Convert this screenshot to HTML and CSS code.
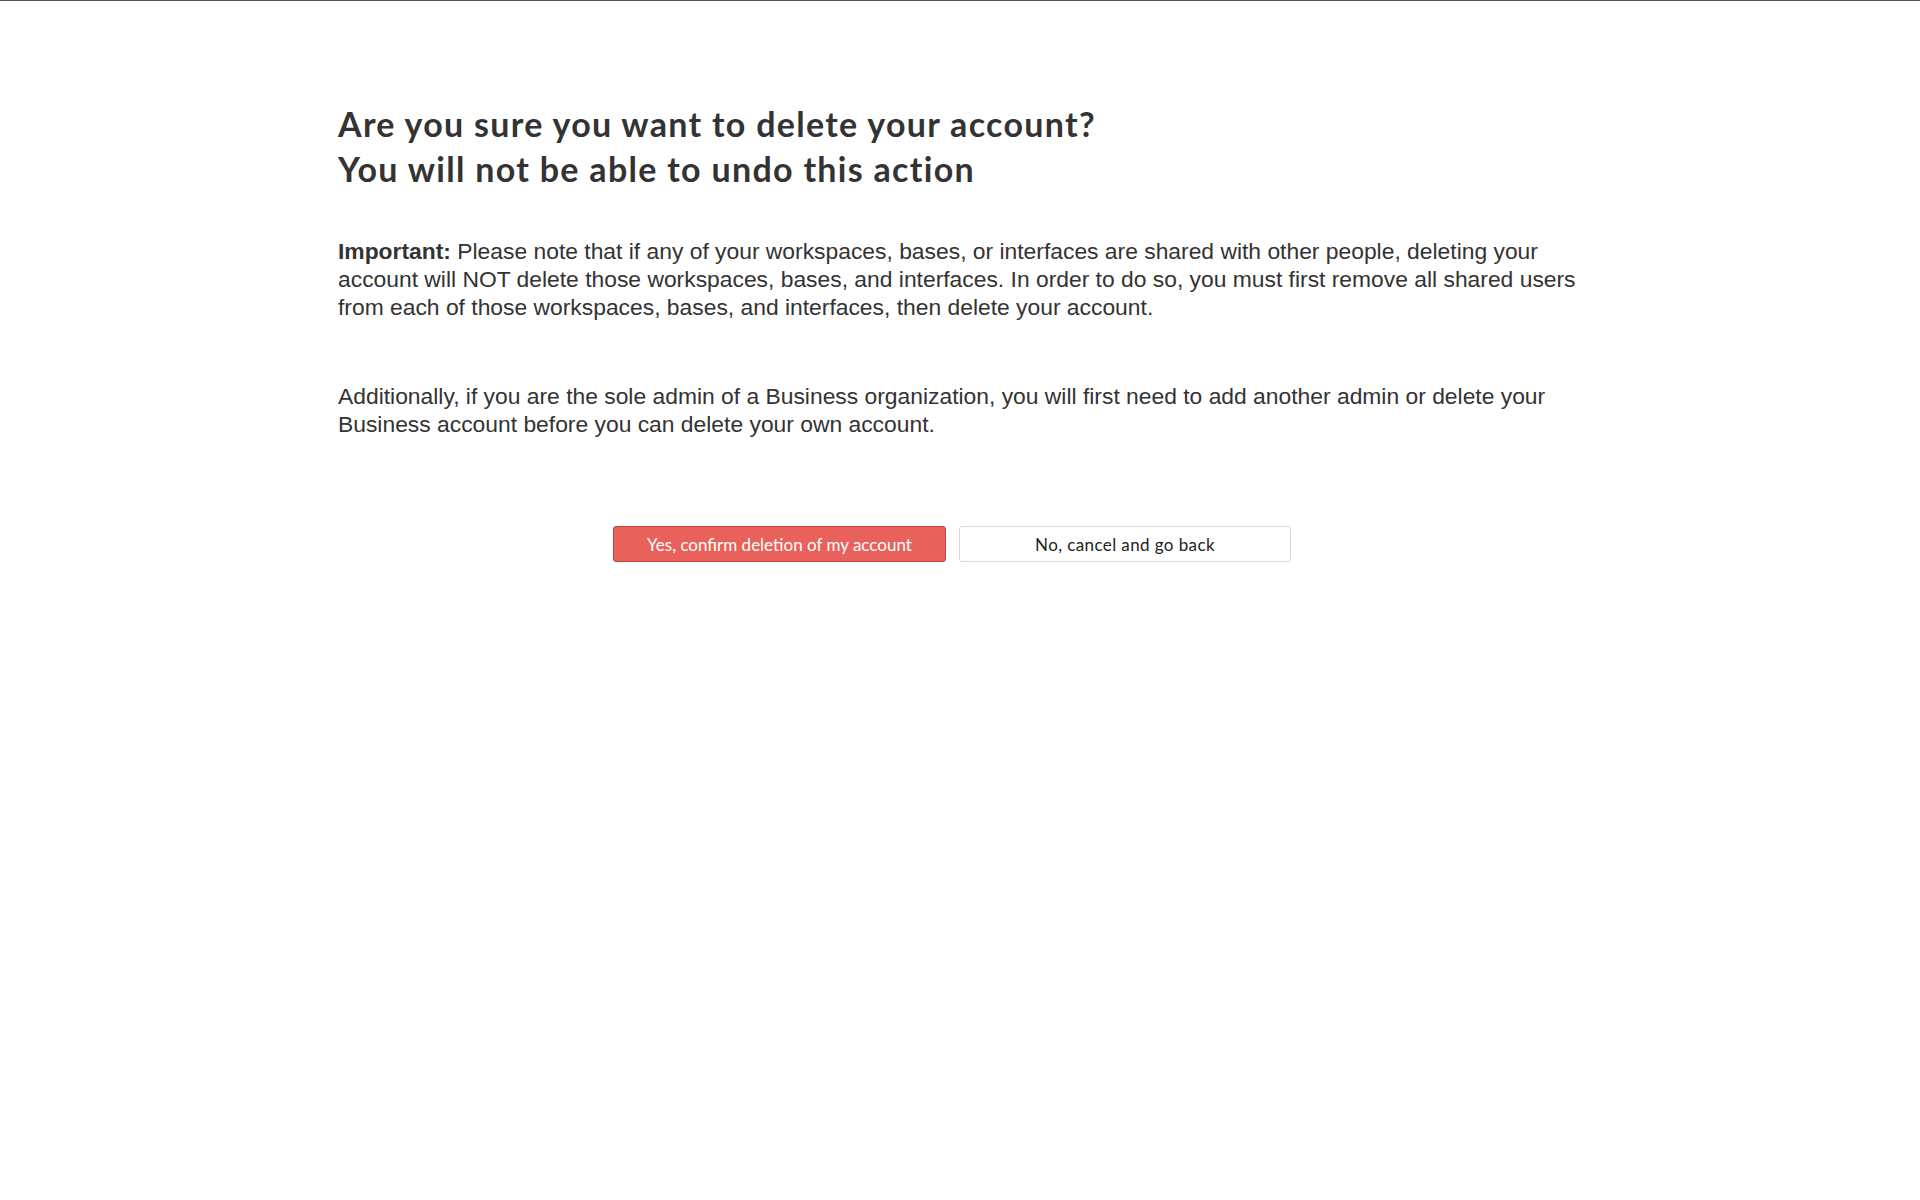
FILE: index.html
```html
<!DOCTYPE html>
<html lang="en">
<head>
<meta charset="utf-8">
<title>Delete account</title>
<link rel="stylesheet" href="styles.css">
</head>
<body>
<main class="page">
  <h1 class="title">Are you sure you want to delete your account?<br>You will not be able to undo this action</h1>
  <p class="note"><strong>Important:</strong> Please note that if any of your workspaces, bases, or interfaces are shared with other people, deleting your account will NOT delete those workspaces, bases, and interfaces. In order to do so, you must first remove all shared users from each of those workspaces, bases, and interfaces, then delete your account.</p>
  <p class="note note-second">Additionally, if you are the sole admin of a Business organization, you will first need to add another admin or delete your Business account before you can delete your own account.</p>
  <div class="actions">
    <button class="btn btn-danger" type="button">Yes, confirm deletion of my account</button>
    <button class="btn btn-default" type="button">No, cancel and go back</button>
  </div>
</main>
</body>
</html>
```

FILE: styles.css
```css
html, body {
  margin: 0;
  padding: 0;
  background: #fff;
}
body {
  border-top: 1px solid #555;
  color: #333;
  font-family: "Liberation Sans", Arial, sans-serif;
}
.page {
  width: 1244px;
  margin: 0 auto;
  padding-top: 100px;
}
.title {
  margin: 0;
  font-family: "Lato", "Liberation Sans", sans-serif;
  font-weight: 700;
  font-size: 34px;
  line-height: 45px;
  letter-spacing: 1.3px;
  color: #333;
}
.note {
  margin: 46px 0 0;
  font-size: 22.85px;
  line-height: 28px;
  color: #333;
}
.note strong {
  font-weight: 700;
}
.note-second {
  margin-top: 61px;
}
.actions {
  display: flex;
  justify-content: center;
  gap: 13px;
  margin-top: 88px;
  padding-right: 16px;
}
.btn {
  width: 333px;
  height: 36px;
  border-radius: 3px;
  font-family: "Lato", "Liberation Sans", sans-serif;
  font-size: 17px;
  cursor: pointer;
  padding: 0;
}
.btn-danger {
  background: #e8625b;
  border: 1px solid #b8433d;
  color: #fff;
}
.btn-default {
  width: 332px;
  background: #fff;
  border: 1px solid #d9d9d9;
  color: #222;
  letter-spacing: 0.4px;
}
```
